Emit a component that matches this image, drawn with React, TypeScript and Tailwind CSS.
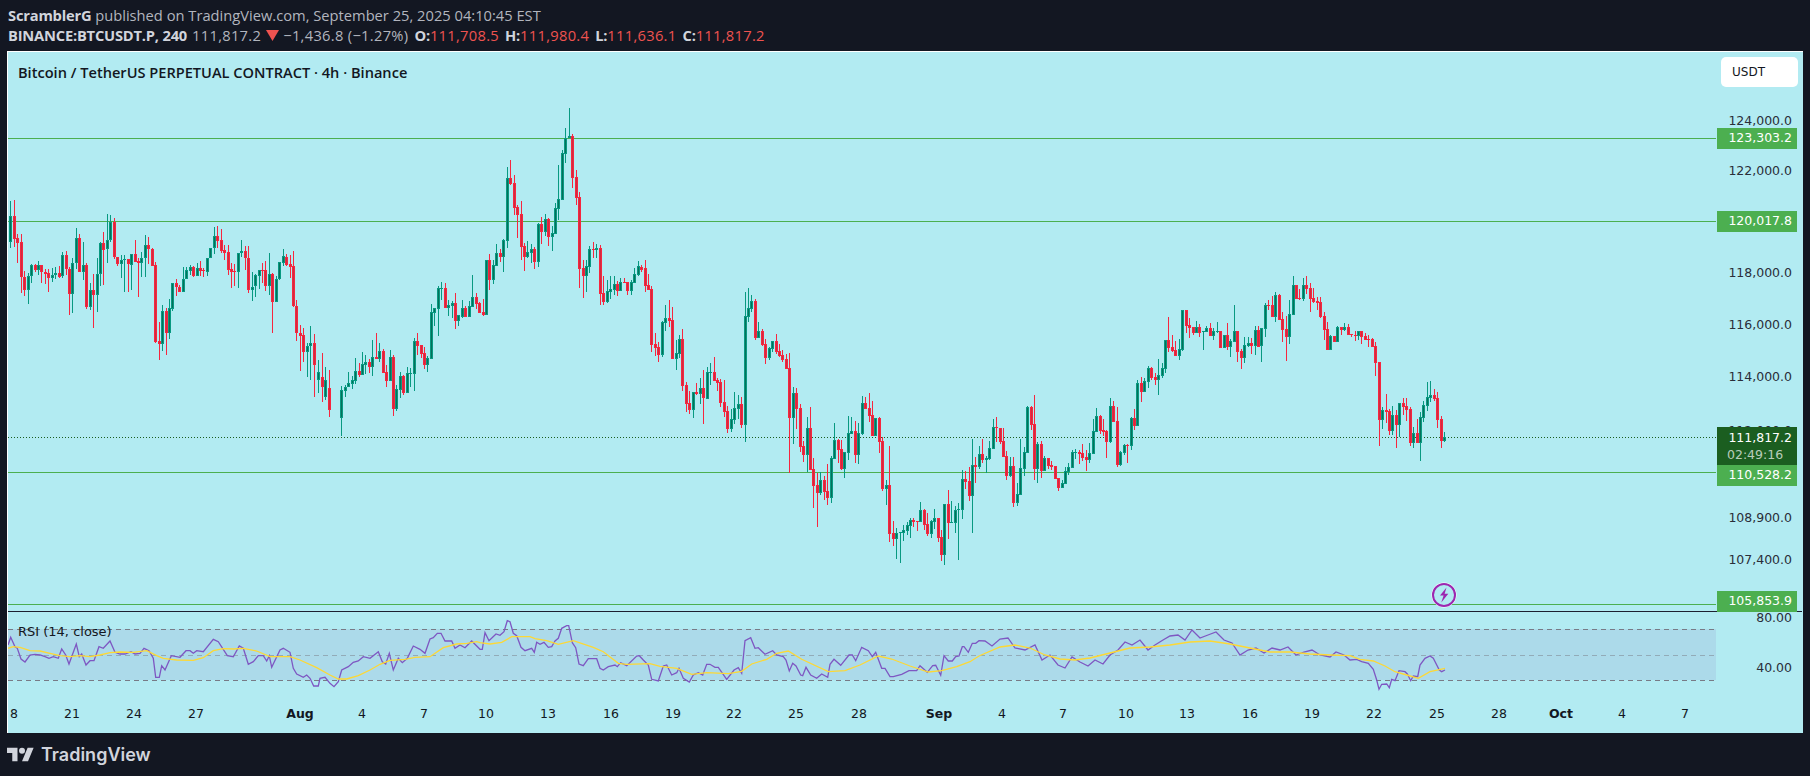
import React from 'react'

const UP = '#089981'
const UP_CORE = '#06705a'
const DOWN = '#f7263f'
const DOWN_CORE = '#cf2b40'

// candles as read off the chart at 3x: x dir high bodyTop bodyBottom low
const segments: { x0: number; y0: number; rows: string }[] = [
  {
    x0: 0,
    y0: 180,
    rows: `31 g 63 108 187 205
43 r 60 108 177 200
52 r 163 175 188 248
64 r 163 187 292 338
73 r 273 292 329 347
85 g 280 287 329 371
94 g 252 256 287 308
106 r 252 256 269 275
115 g 243 256 269 284
124 r 256 256 277 308
136 r 267 276 281 311
145 r 267 280 293 335
157 g 264 284 293 305
166 g 262 280 284 298
178 r 258 280 290 293
187 g 217 226 289 293
199 r 213 226 268 284
208 r 260 268 341 404
217 g 235 250 341 398
229 g 144 175 250 266
238 r 162 175 275 275
250 g 186 256 275 299
259 r 250 256 380 386
271 g 309 331 380 389
280 r 282 331 344 443
292 g 234 283 344 395
301 g 186 190 283 319
310 r 156 190 209 314
322 g 102 181 208 248
331 g 105 125 181 185
343 r 114 125 232 236
352 r 231 232 253 257
364 g 225 241 253 293
373 g 225 238 241 335
385 r 238 238 253 335
394 g 222 223 254 329
406 r 180 223 245 247
415 r 235 244 250 350
424 g 216 235 250 292
436 g 165 196 235 292
445 r 171 196 208 253
457 r 205 208 257 259
466 r 247 256 485 488
478 r 427 484 491 539
487 g 375 394 491 512
499 r 385 394 460 524
508 g 357 385 460 478
517 g 310 310 386 392
529 r 297 310 322 347
538 r 316 322 335 335
550 g 262 298 335 335
559 g 260 271 298 298
571 g 255 262 272 285
580 r 258 262 287 290
592 g 250 265 287 287
601 r 243 265 272 287
610 r 265 271 272 290
622 g 235 235 275 287
631 g 204 205 235 235
643 g 141 169 205 221
652 r 138 169 182 204
664 r 148 181 212 218
673 r 195 211 218 240
685 r 195 217 269 285
694 r 249 268 275 323
703 r 251 274 275 317
715 g 220 220 277 323
724 g 180 214 220 232
736 r 198 214 235 269
745 r 198 235 331 338
757 g 276 320 331 362
766 g 283 286 319 350
778 g 270 271 287 326
787 r 249 271 272 308
796 r 243 271 317 332
808 g 219 283 317 344
817 r 280 283 367 458
829 g 289 298 367 367
838 g 247 247 298 300
850 g 207 229 248 257
859 r 222 232 254 257
871 r 225 253 260 293
880 r 213 259 379 380
889 r 361 379 460 482
901 r 435 460 467 572
910 r 444 466 515 545
922 g 490 497 515 590
931 g 438 490 497 600
943 r 462 490 555 650
955 g 540 575 600 640
966 r 520 590 620 665
976 g 560 600 650 660
987 r 570 625 690 710`,
  },
  {
    x0: 340,
    y0: 100,
    rows: `4 g 858 870 955 1008
16 g 855 861 873 890
25 g 817 850 862 862
37 g 828 840 852 868
46 g 774 813 843 853
58 r 790 813 825 830
67 g 756 793 825 825
76 g 765 786 795 823
88 r 778 786 800 820
97 g 720 772 800 828
109 r 699 771 778 778
118 g 729 753 777 785
130 r 748 753 818 818
139 r 795 816 842 860
151 g 750 771 842 842
160 r 765 771 926 947
169 g 855 867 926 932
181 g 815 828 870 893
190 r 825 828 879 885
202 g 801 820 878 880
211 g 805 820 822 860
223 g 714 723 822 873
232 r 699 723 738 765
244 r 735 735 762 774
253 r 741 759 795 807
262 g 769 774 795 816
274 g 612 636 776 776
283 g 624 624 638 678
295 g 558 564 626 708
304 g 547 565 566 600
316 r 549 564 623 623
325 g 600 615 623 648
337 g 604 609 617 654
346 r 579 609 663 687
355 g 645 645 663 678
367 g 600 624 650 654
376 r 618 625 651 651
388 g 602 619 651 651
397 g 525 591 620 620
409 r 578 591 612 628
418 r 605 609 639 639
430 r 598 636 645 648
439 g 480 480 644 644
448 r 462 480 540 570
460 g 480 495 540 552
469 g 432 459 498 498
481 r 448 459 470 486
490 g 418 420 470 516
502 g 200 234 423 444
511 r 180 234 252 255
523 r 225 249 323 345
532 r 315 321 345 414
544 r 303 342 441 480
553 r 429 438 471 513
562 g 423 456 471 473
574 g 432 447 459 489
583 r 441 447 486 507
595 g 369 372 486 501
604 r 351 372 396 432
616 g 342 357 396 408
625 r 354 357 411 438
637 g 378 399 411 453
646 g 309 324 402 402
655 g 195 297 327 360
667 g 150 159 300 300
676 g 84 114 162 189
688 g 24 108 115 115
697 r 102 108 234 264
709 r 210 231 294 315
718 r 276 291 507 564
730 r 480 504 528 594
739 g 480 498 528 576
748 g 438 447 501 519
760 r 426 447 450 474
769 g 432 444 450 474
781 r 435 444 582 615
790 r 528 579 606 615
802 g 540 573 606 609
811 g 528 567 576 597
823 g 528 552 570 585
832 r 543 552 573 588
841 g 534 546 573 573
853 r 534 546 549 549
862 r 546 546 573 585
874 g 540 546 573 585
883 g 504 522 549 549
895 g 483 498 525 528`,
  },
  {
    x0: 630,
    y0: 270,
    rows: `34 r -15 -10 0 6
46 r -30 -5 47 66
55 r 12 45 60 60
64 r 48 57 224 246
76 r 190 222 234 258
85 r 216 231 255 276
97 g 153 156 255 260
106 g 105 144 158 183
118 r 90 144 153 171
127 r 111 150 267 267
139 g 210 249 267 300
148 g 195 207 252 264
157 r 177 207 348 363
169 r 336 345 402 426
178 r 363 400 420 432
190 g 366 366 420 444
199 r 339 366 372 375
211 g 324 354 372 402
220 r 300 354 384 462
232 g 291 306 386 388
241 g 279 306 308 345
253 r 261 306 333 333
262 r 324 330 339 363
271 r 327 336 399 411
283 r 330 396 426 441
292 r 408 423 477 489
304 g 417 447 477 486
313 g 366 414 450 462
325 g 375 402 417 447
334 r 381 402 465 474
346 g 66 138 465 516
355 g 54 114 141 156
364 g 75 93 117 126
376 r 87 93 204 210
385 g 156 183 204 204
397 r 177 183 225 228
406 r 207 222 264 282
418 g 231 234 264 270
427 g 213 213 237 246
439 r 192 213 246 252
448 r 222 243 258 261
457 r 240 255 270 276
469 r 252 267 297 297
478 r 249 294 444 609
490 g 351 369 444 522
499 r 354 369 417 477
511 r 402 414 531 546
520 r 513 528 555 576
532 g 441 474 555 606
541 r 411 474 600 600
550 r 564 597 648 714
562 r 609 645 669 771
571 g 606 630 669 675
583 r 618 630 666 690
592 r 582 663 684 705
604 g 558 564 684 699
613 g 459 510 567 567
625 r 507 510 540 579
634 r 510 537 597 600
643 g 546 546 597 624
655 g 438 489 549 570
664 g 441 483 492 492
676 r 453 483 555 579
685 g 459 489 555 582
697 g 378 399 492 495
706 r 381 399 417 417
718 r 369 414 438 456
727 r 393 435 498 498
736 g 444 444 498 498
748 r 441 444 516 549
757 r 501 513 657 663
769 g 630 645 657 705
778 r 528 645 792 816
790 r 753 789 807 828
799 g 774 789 807 867
811 g 786 786 789 879
820 g 765 780 789 813
832 g 756 765 783 795
841 g 744 750 768 804
850 r 744 750 756 771
862 r 753 754 756 783
871 g 696 720 756 756
883 r 717 720 765 780
892 r 729 762 792 798`,
  },
  {
    x0: 920,
    y0: 380,
    rows: `34 g 420 423 462 474
43 g 387 414 426 447
55 r 414 414 474 486
64 r 450 471 525 543
73 g 372 372 525 555
85 r 330 372 429 477
94 g 363 426 429 429
106 g 378 390 429 459
115 g 369 387 388 540
127 g 270 297 390 417
136 r 273 297 306 327
148 r 261 303 348 363
157 g 177 255 348 459
166 r 231 255 261 309
178 g 198 222 261 267
187 r 177 222 240 249
199 g 228 235 239 279
208 g 183 204 237 240
220 g 117 141 207 207
229 r 111 141 143 186
241 r 144 144 186 192
250 r 144 183 231 231
259 r 213 228 288 300
271 g 231 258 288 291
280 r 231 258 369 381
292 g 309 342 369 378
301 g 177 264 345 345
313 g 201 216 267 288
322 g 78 81 219 219
334 r 78 81 135 150
343 r 45 132 267 300
352 g 186 192 267 309
364 r 183 192 273 294
373 g 228 234 273 273
385 r 234 234 258 267
394 r 243 255 261 270
406 r 258 258 297 297
415 r 294 294 324 333
427 g 300 309 324 324
436 g 261 273 312 312
445 g 249 261 276 285
457 g 210 216 264 264
466 g 207 216 216 237
478 r 210 216 222 252
487 r 192 219 234 243
499 r 210 231 240 273
508 g 189 219 240 249
520 g 117 153 222 222
529 g 84 108 156 156
541 r 105 108 153 162
550 r 117 150 156 168
559 r 150 153 186 234
571 g 54 78 187 189
580 r 63 78 126 126
592 r 81 123 255 261
601 g 213 216 255 258
613 g 192 195 219 225
622 r 192 195 196 249
634 g 111 114 198 210
643 r 87 114 138 150
652 g 0 9 138 138`,
  },
  {
    x0: 1140,
    y0: 260,
    rows: `4 r 351 369 396 426
13 g 354 363 396 396
25 g 318 324 366 384
34 r 321 324 354 360
46 r 339 351 360 375
55 g 297 345 360 405
67 g 309 324 348 354
76 g 240 240 326 339
85 r 171 240 264 276
97 r 225 261 273 276
106 r 243 270 288 288
118 g 237 267 288 300
127 g 150 150 270 273
139 r 150 150 198 219
148 r 174 195 204 234
160 r 202 202 219 225
169 g 183 202 219 219
178 r 192 202 219 231
190 g 213 213 215 270
199 g 198 204 216 216
211 r 189 204 228 228
220 g 204 213 228 240
232 g 186 213 215 219
241 r 213 213 264 264
253 g 225 225 264 264
262 r 189 225 261 270
271 g 237 243 261 291
283 g 135 213 246 246
292 r 213 213 276 306
304 r 267 273 294 327
313 g 231 255 294 309
325 g 231 249 258 261
334 r 234 249 258 282
346 g 198 210 258 285
355 r 198 210 261 261
364 g 204 204 258 306
376 g 129 135 207 231
385 r 120 135 137 150
397 r 108 135 171 171
406 g 96 105 171 186
418 r 102 105 180 180
427 r 156 177 210 246
439 r 168 207 231 303
448 g 120 162 231 252
460 g 48 75 165 165
469 r 75 75 117 117
478 r 87 114 117 120
490 g 54 75 117 123
499 r 48 75 87 102
511 r 69 84 117 156
520 r 84 114 126 129
532 r 111 123 129 150
541 r 111 126 171 174
553 r 156 168 210 240
562 r 186 207 270 270
571 g 225 228 270 270
583 r 228 228 246 246
592 g 198 201 246 246
604 r 201 201 210 225
613 g 189 201 210 213
625 r 192 201 225 225
634 r 222 222 224 231
646 r 213 225 226 243
655 g 213 213 228 240
664 r 213 213 231 252
676 r 219 228 240 240
685 r 225 237 240 261
697 r 234 237 261 261
706 r 246 258 309 348
718 r 306 306 480 558
727 g 441 450 480 507
739 r 402 450 456 489
748 r 447 453 513 525
757 g 438 465 513 525
769 r 450 465 495 564
778 g 429 429 495 531
790 r 414 429 441 465
799 r 414 438 450 483
811 r 441 447 549 558
820 g 501 519 549 564
832 r 477 519 549 549
841 g 456 471 549 603
850 g 423 435 474 486
862 g 366 411 438 453
871 g 363 405 414 426
883 r 387 405 417 423
892 r 396 414 480 504
904 r 468 477 543 564
913 g 516 531 543 546`,
  },
]

type Candle = { x: number; up: boolean; high: number; top: number; bottom: number; low: number }

const candles: Candle[] = segments.flatMap((seg) =>
  seg.rows.split('\n').map((row) => {
    const [x, dir, high, top, bottom, low] = row.trim().split(' ')
    const py = (v: string) => Math.round(seg.y0 + Number(v) / 3)
    return {
      x: Math.round(seg.x0 + Number(x) / 3),
      up: dir === 'g',
      high: py(high),
      top: py(top),
      bottom: py(bottom),
      low: py(low),
    }
  }),
)

// zoomed point lists -> page coordinates
const scaled = (x0: number, y0: number, pts: string) =>
  pts
    .trim()
    .split(/\s+/)
    .map((p) => {
      const [x, y] = p.split(',').map(Number)
      return `${(x0 + x / 3).toFixed(1)},${(y0 + y / 3).toFixed(1)}`
    })
    .join(' ')

const rsiLine = [
  scaled(0, 590, `24,165 32,142 45,170 52,175 63,207 75,216 90,195 105,193 120,195 135,200 147,205 160,200 175,205 185,177 197,195 207,222 229,162 238,200 245,192 258,225 270,212 282,212 297,170 310,175 330,153 345,187 360,192 375,192 393,185 405,192 420,190 432,175 447,182 460,205 467,262 478,262 485,227 495,240 514,197 540,202 558,182 570,182 580,190 590,182 610,185 640,148 655,155 682,197 700,200 718,168 730,175 745,223 760,215 775,197 790,197 800,213 808,197 815,232 840,180 850,175 870,187 880,235 890,252 910,262 920,255 930,265 941,288 955,288 960,265 975,262 990,280 1002,290 1015,275 1025,240 1045,230 1060,217 1075,213 1090,200 1110,205 1135,185 1147,215 1157,222 1168,190 1180,240 1195,205 1207,218 1222,205 1240,168 1260,178 1275,190 1290,147 1300,143 1312,130 1323,130 1335,153 1355,153 1365,175 1380,165 1395,173 1415,153 1440,178`),
  scaled(480, 610, `0,118 7,118 15,68 27,92 48,72 60,76 72,65 82,32 90,35 100,70 110,77 123,112 135,122 155,115 163,127 170,97 180,103 192,97 205,112 215,110 225,93 235,85 245,55 260,47 266,47 277,98 287,113 297,162 310,167 325,146 350,146 360,175 370,180 385,170 405,165 412,170 422,158 440,167 470,138 478,137 490,150 505,165 515,208 535,213 550,168 560,165 575,195 590,188 597,175 610,205 628,216 640,195 655,188 668,195 680,163 690,163 705,172 715,172 740,208 762,180 775,173 785,190 795,92 812,83 825,115 835,113 855,133 878,122 890,135 910,140 918,150 928,183 938,160 948,168 962,195 968,197 978,172 992,195 1010,205 1025,192 1043,202 1050,163 1062,148 1082,166 1107,135 1117,135 1127,152 1145,112 1165,122 1177,140 1187,127 1205,175 1215,175 1230,200 1240,200 1265,193 1287,182 1310,182 1320,167 1342,187 1358,167 1367,166 1382,196 1392,137 1405,153 1417,153 1427,140 1437,138 1447,110 1452,110 1465,127 1477,100 1487,100 1497,92`),
  `985,641 992,646 1000,639 1008,638 1015,648 1025,650 1035,645 1042,660 1050,655 1058,665 1065,668 1072,657 1080,662 1088,666 1095,660 1103,664 1110,655 1118,650 1125,642 1132,645 1140,640 1148,650 1155,645 1163,640 1170,636 1178,635 1185,640 1192,630 1200,638 1208,635 1216,632 1224,640 1232,643 1240,655 1248,650 1256,648 1264,653 1272,648 1280,650 1288,647 1296,655 1304,652 1312,650 1320,655 1330,657 1336,652 1344,655`,
  scaled(1350, 570, `0,270 20,268 35,275 55,280 70,298 80,330 87,358 95,343 110,342 118,353 125,328 135,332 147,302 165,305 172,312 182,332 190,318 203,320 210,285 225,265 240,258 250,265 268,300 275,305 285,300`),
].join(' ')

const rsiAverage = [
  scaled(0, 590, `24,175 40,170 60,172 90,182 120,183 150,190 180,197 210,200 240,197 270,200 300,195 330,188 360,186 400,187 440,182 470,197 490,205 530,210 580,211 610,203 640,182 670,176 700,177 730,175 770,183 810,200 870,200 900,210 950,233 990,255 1015,267 1040,267 1075,257 1110,240 1140,223 1170,211 1215,208 1245,202 1290,200 1330,173 1370,162 1400,160 1430,155`),
  scaled(480, 610, `0,98 30,102 65,97 95,80 150,80 165,86 200,92 235,103 280,92 340,112 370,125 415,160 440,163 510,161 540,169 590,175 635,193 680,188 745,191 785,184 815,162 860,148 890,130 925,123 965,148 1045,185 1095,182 1140,165 1195,138 1235,147 1290,168 1345,186 1385,182 1430,170 1470,155 1497,138`),
  `1000,647 1015,645 1030,648 1045,655 1060,659 1075,660 1090,658 1110,653 1130,648 1150,647 1170,645 1190,642 1210,641 1230,644 1250,648 1270,652 1290,652 1310,654 1330,655`,
  scaled(1350, 570, `0,257 30,268 70,273 105,288 135,305 170,315 205,325 240,305 285,295`),
].join(' ')

const priceLabels = [
  { text: '124,000.0', y: 120 },
  { text: '122,000.0', y: 170 },
  { text: '118,000.0', y: 272 },
  { text: '116,000.0', y: 324 },
  { text: '114,000.0', y: 376 },
  { text: '112,000.0', y: 430 },
  { text: '108,900.0', y: 517 },
  { text: '107,400.0', y: 559 },
]

const levels = [
  { text: '123,303.2', y: 138 },
  { text: '120,017.8', y: 221 },
  { text: '110,528.2', y: 472, tagTop: 465 },
  { text: '105,853.9', y: 604, tagTop: 591 },
]

const ohlc = [
  { label: 'O:', value: '111,708.5' },
  { label: 'H:', value: '111,980.4' },
  { label: 'L:', value: '111,636.1' },
  { label: 'C:', value: '111,817.2' },
]

const timeLabels = [
  { text: '8', x: 14 },
  { text: '21', x: 72 },
  { text: '24', x: 134 },
  { text: '27', x: 196 },
  { text: 'Aug', x: 300, bold: true },
  { text: '4', x: 362 },
  { text: '7', x: 424 },
  { text: '10', x: 486 },
  { text: '13', x: 548 },
  { text: '16', x: 611 },
  { text: '19', x: 673 },
  { text: '22', x: 734 },
  { text: '25', x: 796 },
  { text: '28', x: 859 },
  { text: 'Sep', x: 939, bold: true },
  { text: '4', x: 1002 },
  { text: '7', x: 1063 },
  { text: '10', x: 1126 },
  { text: '13', x: 1187 },
  { text: '16', x: 1250 },
  { text: '19', x: 1312 },
  { text: '22', x: 1374 },
  { text: '25', x: 1437 },
  { text: '28', x: 1499 },
  { text: 'Oct', x: 1561, bold: true },
  { text: '4', x: 1622 },
  { text: '7', x: 1685 },
]

function CandleMark({ c }: { c: Candle }) {
  const body = Math.max(c.bottom - c.top, 1)
  return (
    <g>
      <rect x={c.x} y={c.high} width={1} height={Math.max(c.low - c.high, 1)} fill={c.up ? UP : DOWN} />
      <rect x={c.x - 1} y={c.top} width={3} height={body} fill={c.up ? UP : DOWN} />
      {body > 2 && <rect x={c.x} y={c.top + 1} width={1} height={body - 2} fill={c.up ? UP_CORE : DOWN_CORE} />}
    </g>
  )
}

function PricePane() {
  return (
    <div className="relative flex h-[559px] w-full">
      <svg className="block h-[559px] w-[1708px]" viewBox="8 52 1708 559" shapeRendering="crispEdges">
        {levels.map((l) => (
          <rect key={l.text} x={8} y={l.y} width={1708} height={1} fill="#4caf50" />
        ))}
        <line x1={8} x2={1716} y1={437.5} y2={437.5} stroke="#1b5e20" strokeDasharray="1 2" />
        {candles.map((c, i) => (
          <CandleMark key={i} c={c} />
        ))}
        <g shapeRendering="auto">
          <circle cx={1444} cy={595} r={12.5} fill="#ffffff" />
          <circle cx={1444} cy={595} r={11} fill="#b2ebf2" stroke="#9c27b0" strokeWidth={2} />
          <path d="M1446.5 587.5 L1440 595.6 H1443.6 L1441.3 602.5 L1448.3 593.8 H1444.6 Z" fill="#9c27b0" />
        </g>
      </svg>

      <div className="absolute left-[10px] top-[12px] whitespace-nowrap text-[14.6px] font-semibold leading-4 text-[#131722] [font-family:'Open_Sans',sans-serif]">
        Bitcoin / TetherUS PERPETUAL CONTRACT · 4h · Binance
      </div>

      <div className="relative flex-1 text-[12.5px] text-[#2a2e39] [font-family:'DejaVu_Sans',sans-serif]">
        <div className="absolute left-[5px] top-[5px] flex h-[30px] w-[77px] items-center rounded-[5px] bg-white pl-[11px] text-[12px] text-[#131722]">
          USDT
        </div>
        {priceLabels.map((p) => (
          <div
            key={p.text}
            className="absolute right-[11px] leading-4"
            style={{ top: p.y - 52 - 7 }}
          >
            {p.text}
          </div>
        ))}
        {levels.map((l) => (
          <div
            key={l.text}
            className="absolute left-[1px] flex h-[21px] w-[80px] items-center justify-end bg-[#4caf50] pr-[5px] text-white"
            style={{ top: (l.tagTop ?? l.y - 10) - 52 }}
          >
            {l.text}
          </div>
        ))}
        <div className="absolute left-[1px] top-[375px] flex h-[38px] w-[80px] flex-col justify-center bg-[#1b5e20] pr-[5px] leading-[17px] text-white">
          <span className="text-right">111,817.2</span>
          <span className="pl-[10px] text-white/70">02:49:16</span>
        </div>
      </div>
    </div>
  )
}

function RsiPane() {
  return (
    <div className="relative flex h-[88px] w-full">
      <svg className="block h-[88px] w-[1708px]" viewBox="8 612 1708 88">
        <rect x={8} y={629} width={1708} height={51} fill="#acdaea" />
        <line x1={8} x2={1716} y1={629.5} y2={629.5} stroke="#787b86" strokeDasharray="5 4" />
        <line x1={8} x2={1716} y1={655.5} y2={655.5} stroke="#787b86" strokeOpacity={0.5} strokeDasharray="5 4" />
        <line x1={8} x2={1716} y1={680.5} y2={680.5} stroke="#787b86" strokeDasharray="5 4" />
        <polyline points={rsiLine} fill="none" stroke="#7e57c2" strokeWidth={1.3} />
        <polyline points={rsiAverage} fill="none" stroke="#fdd835" strokeWidth={1.3} />
      </svg>
      <div className="absolute left-[10px] top-[12px] whitespace-nowrap text-[13px] leading-4 text-[#131722] [font-family:'DejaVu_Sans',sans-serif]">
        RSI (14, close)
      </div>
      <div className="relative flex-1 text-[12.5px] text-[#2a2e39] [font-family:'DejaVu_Sans',sans-serif]">
        <div className="absolute right-[11px] top-[-2px] leading-4">80.00</div>
        <div className="absolute right-[11px] top-[48px] leading-4">40.00</div>
      </div>
    </div>
  )
}

function TimeAxis() {
  return (
    <div className="relative h-[32px] w-full text-[12.5px] text-[#131722] [font-family:'DejaVu_Sans',sans-serif]">
      {timeLabels.map((t, i) => (
        <span
          key={i}
          className={`absolute top-[6px] -translate-x-1/2 leading-4 ${t.bold ? 'font-bold' : ''}`}
          style={{ left: t.x - 8 }}
        >
          {t.text}
        </span>
      ))}
    </div>
  )
}

export default function App() {
  return (
    <div className="flex h-[776px] w-[1810px] flex-col overflow-hidden bg-[#131722]">
      <header className="h-[51px] pl-[8px] pt-[5px] text-[14.7px] leading-[20px] text-[#b2b5be] [font-family:'Open_Sans',sans-serif]">
        <div className="whitespace-nowrap">
          <span className="font-bold tracking-[-0.2px] text-[#d1d4dc]">ScramblerG</span> published on TradingView.com, September 25, 2025 04:10:45 EST
        </div>
        <div className="flex items-center whitespace-nowrap tracking-[0.3px]">
          <span className="font-bold tracking-[-0.2px] text-[#d1d4dc]">BINANCE:BTCUSDT.P, 240</span>
          <span className="ml-[5px]">111,817.2</span>
          <svg className="ml-[5px] mr-[4px]" width="13" height="11" viewBox="0 0 13 11" fill="#ef5350">
            <path d="M0 0H13L6.5 11Z" />
          </svg>
          <span>−1,436.8 (−1.27%)</span>
          {ohlc.map((o) => (
            <span key={o.label} className="ml-[6px]">
              <span className="font-bold tracking-[-0.2px] text-[#d1d4dc]">{o.label}</span>
              <span className="text-[#ef5350]">{o.value}</span>
            </span>
          ))}
        </div>
      </header>

      <main className="ml-[7px] flex h-[682px] w-[1796px] flex-col border-l border-t border-white bg-[#b2ebf2]">
        <PricePane />
        <div className="mr-[1px] h-px shrink-0 bg-[#1c2030]" />
        <RsiPane />
        <TimeAxis />
      </main>

      <footer className="flex flex-1 items-center pl-[7px]">
        <svg width="27" height="15" viewBox="0 3.5 36 19" fill="#d1d4dc">
          <path d="M14 22H7V11H0V4h14v18zM28 22h-8l7.5-18h8L28 22z" />
          <circle cx="20" cy="8" r="4" />
        </svg>
        <span className="ml-[7px] text-[18px] font-semibold leading-6 text-[#d1d4dc] [font-family:Inter,sans-serif]">TradingView</span>
      </footer>
    </div>
  )
}
